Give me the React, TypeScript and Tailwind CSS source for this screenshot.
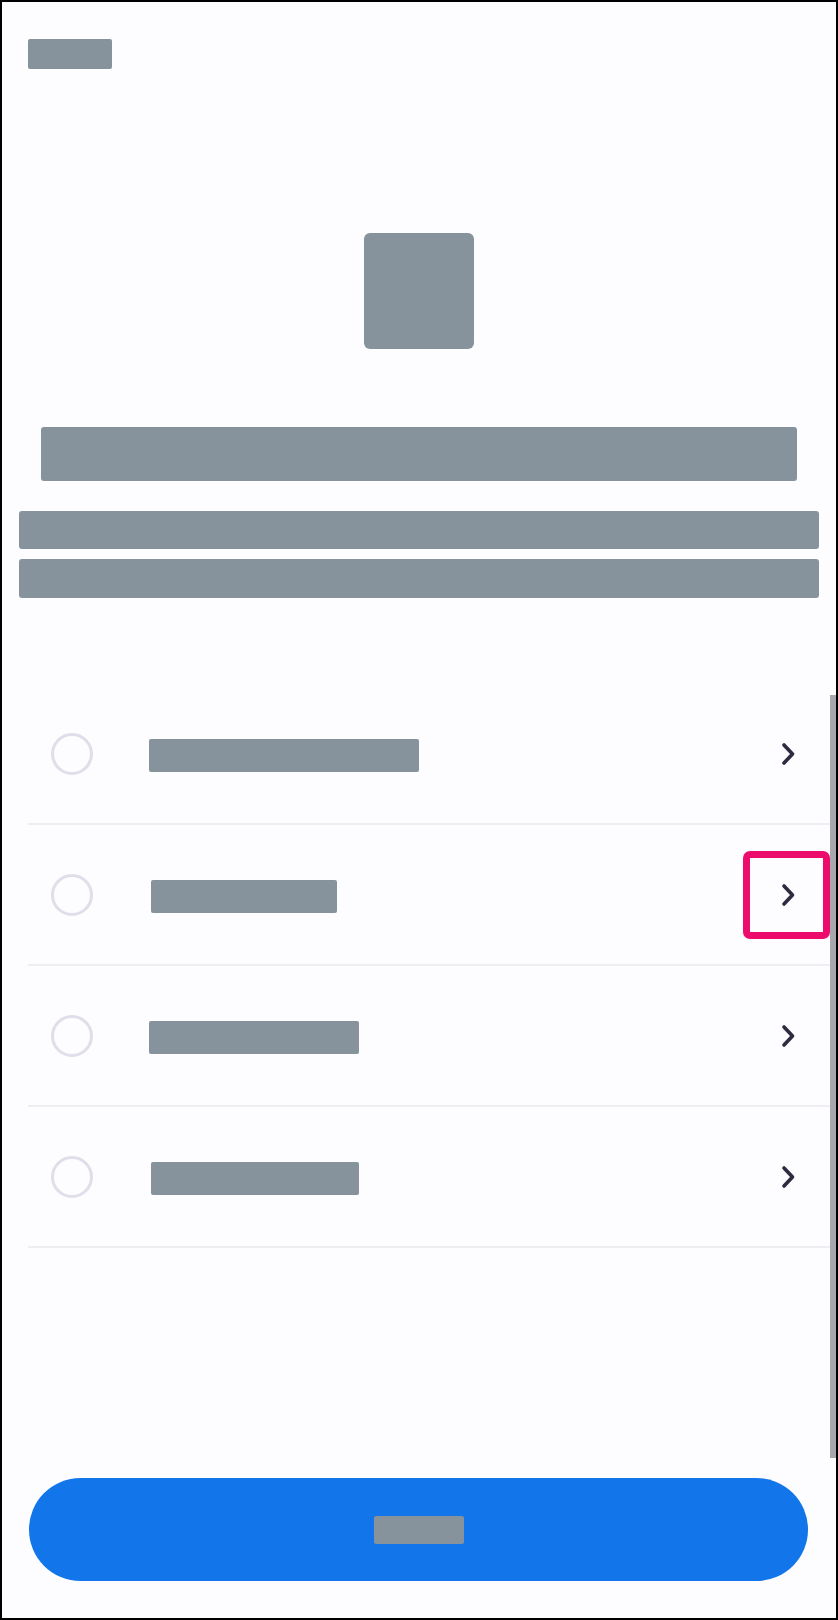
const rows = [
  { textW: "w-[270px]", textMl: "ml-[56px]", highlight: false },
  { textW: "w-[186px]", textMl: "ml-[58px]", highlight: true },
  { textW: "w-[210px]", textMl: "ml-[56px]", highlight: false },
  { textW: "w-[208px]", textMl: "ml-[58px]", highlight: false },
];

const Chevron = () => (
  <svg width="14" height="24" viewBox="0 0 14 24" fill="none">
    <polyline
      points="3,3 11.5,12 3,21"
      stroke="#2e2a40"
      strokeWidth="3.6"
      strokeLinecap="round"
      strokeLinejoin="round"
    />
  </svg>
);

const App = () => {
  return (
    <main className="relative w-[838px] h-[1620px] border-2 border-black bg-[#fdfcfe] flex flex-col overflow-hidden font-['Inter',sans-serif]">
      {/* back / header placeholder */}
      <div className="ml-[26px] mt-[37px] w-[84px] h-[30px] rounded-[2px] bg-[#87939c]" />

      {/* illustration */}
      <div className="self-center mt-[164px] w-[110px] h-[116px] rounded-[6px] bg-[#87939c]" />

      {/* title */}
      <div className="self-center mt-[78px] w-[756px] h-[54px] rounded-[3px] bg-[#87939c]" />

      {/* description */}
      <div className="self-center mt-[30px] w-[800px] h-[38px] rounded-[3px] bg-[#87939c]" />
      <div className="self-center mt-[10px] w-[800px] h-[39px] rounded-[3px] bg-[#87939c]" />

      {/* options */}
      <ul className="mt-[86px] ml-[26px] mr-[6px] flex flex-col">
        {rows.map((row, i) => (
          <li
            key={i}
            className="h-[141px] flex items-center border-b-2 border-[#eeedf1]"
          >
            <div className="ml-[23px] w-[42px] h-[42px] rounded-full border-[3px] border-[#e1dde9] shrink-0" />
            <div className={`${row.textMl} ${row.textW} mt-[4px] h-[33px] rounded-[2px] bg-[#87939c]`} />
            <div className="relative ml-auto mr-[35px] w-[14px] h-[24px]">
              <Chevron />
              {row.highlight && (
                <div className="absolute left-[-38px] top-[-32px] w-[87px] h-[88px] rounded-[7px] border-[7px] border-[#ec0c6c]" />
              )}
            </div>
          </li>
        ))}
      </ul>

      {/* scrollbar */}
      <div className="absolute right-0 top-[693px] w-[6px] h-[763px] bg-[#a9a6ad]" />

      {/* continue button */}
      <button className="mt-auto mb-[37px] ml-[27px] w-[779px] h-[103px] rounded-full bg-[#1276ea] flex items-center justify-center">
        <span className="w-[90px] h-[28px] rounded-[2px] bg-[#87939c]" />
      </button>
    </main>
  );
};

export default App;
